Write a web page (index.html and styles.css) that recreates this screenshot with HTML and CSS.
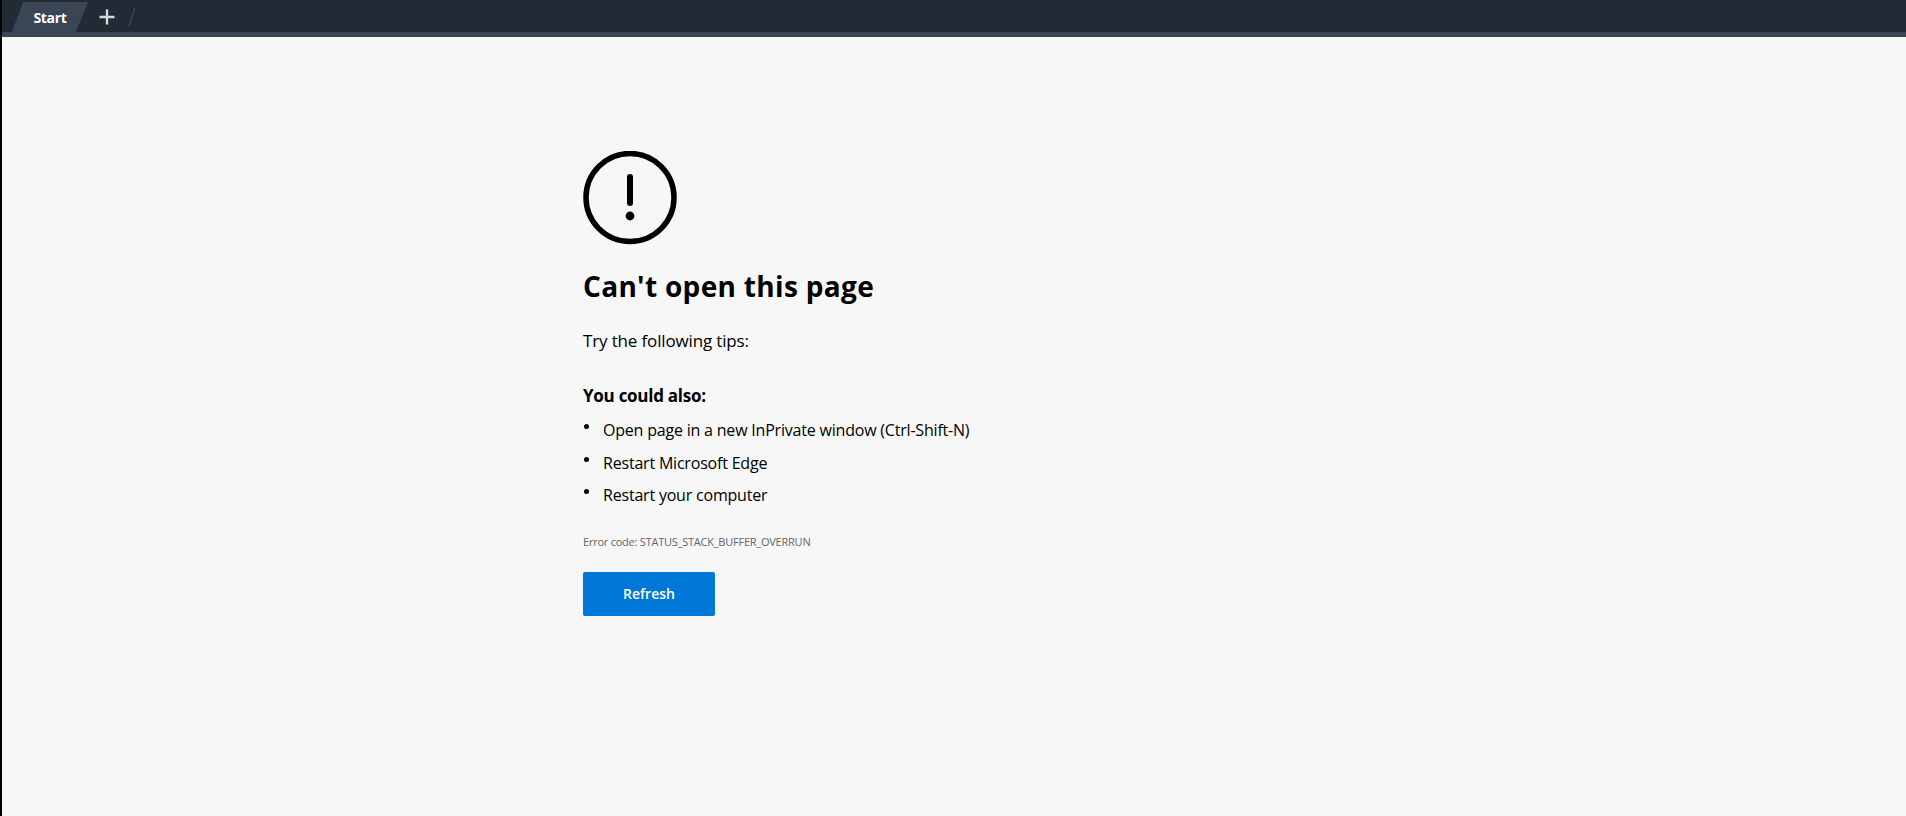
FILE: index.html
```html
<!DOCTYPE html>
<html lang="en">
<head>
<meta charset="utf-8">
<title>Start</title>
<link rel="stylesheet" href="styles.css">
</head>
<body>
<div class="window">
  <header class="tabbar">
    <div class="tabs">
      <div class="tab"><span class="tab-label">Start</span></div>
      <button class="new-tab" aria-label="New tab">
        <svg width="16" height="16" viewBox="0 0 16 16"><path d="M8 0.5V15.5M0.5 8H15.5" stroke="#d5d7da" stroke-width="2.4" fill="none"/></svg>
      </button>
      <svg class="divider" width="8" height="20" viewBox="0 0 8 20"><path d="M7 0.5L1 19.5" stroke="#4a5361" stroke-width="1" fill="none"/></svg>
    </div>
  </header>
  <div class="tabbar-edge"></div>
  <main class="page">
    <div class="content">
      <svg class="alert" width="94" height="94" viewBox="0 0 94 94">
        <circle cx="47" cy="46.5" r="44" fill="none" stroke="#000" stroke-width="5.5"/>
        <path d="M47 26V52" stroke="#000" stroke-width="6" stroke-linecap="round" fill="none"/>
        <circle cx="47" cy="65" r="4.4" fill="#000"/>
      </svg>
      <h1 class="title">Can't open this page</h1>
      <p class="tips">Try the following tips:</p>
      <h2 class="also">You could also:</h2>
      <ul class="list">
        <li>Open page in a new InPrivate window (Ctrl-Shift-N)</li>
        <li>Restart Microsoft Edge</li>
        <li>Restart your computer</li>
      </ul>
      <p class="code">Error code: STATUS_STACK_BUFFER_OVERRUN</p>
      <button class="refresh">Refresh</button>
    </div>
  </main>
</div>
</body>
</html>
```

FILE: styles.css
```css
html, body {
  margin: 0;
  height: 100%;
  overflow: hidden;
}
body {
  background: #000;
  font-family: "Open Sans", "Noto Sans", sans-serif;
  color: #000;
}
.window {
  height: 100%;
  margin-left: 2px;
  display: flex;
  flex-direction: column;
  background: #f7f7f7;
}
.tabbar {
  height: 32px;
  background: #212a35;
  flex: none;
}
.tabbar-edge {
  height: 5px;
  background: #3a4556;
  flex: none;
}
.tabs {
  display: flex;
  align-items: flex-end;
  height: 32px;
  padding-left: 10px;
}
.tab {
  width: 76px;
  height: 30px;
  background: #3a4556;
  clip-path: polygon(11px 0, 100% 0, calc(100% - 12px) 100%, 0 100%);
  display: flex;
  align-items: center;
  justify-content: center;
  margin-right: 11px;
}
.tab-label {
  color: #fff;
  font-size: 14px;
  font-weight: 700;
  letter-spacing: -0.3px;
}
.new-tab {
  width: 16px;
  height: 16px;
  padding: 0;
  border: 0;
  background: none;
  margin-bottom: 7px;
  margin-right: 13px;
  display: flex;
}
.divider {
  margin-bottom: 5px;
}
.page {
  flex: 1;
  padding: 114px 0 0 581px;
}
.content {
  display: flex;
  flex-direction: column;
  align-items: flex-start;
}
.alert {
  display: block;
  margin-bottom: 21px;
}
.title {
  margin: 0 0 23px;
  font-size: 28px;
  line-height: 40px;
  font-weight: 700;
  letter-spacing: 0.32px;
}
.tips {
  margin: 0 0 31px;
  font-size: 17px;
  line-height: 24px;
  letter-spacing: -0.15px;
}
.also {
  margin: 0 0 11px;
  font-size: 17px;
  line-height: 24px;
  font-weight: 700;
  letter-spacing: -0.27px;
}
.list {
  margin: 0 0 17px;
  padding: 0;
  list-style: none;
}
.list li {
  position: relative;
  padding-left: 20px;
  font-size: 16px;
  line-height: 22px;
  margin-bottom: 10.5px;
  letter-spacing: -0.2px;
}
.list li::before {
  content: "";
  position: absolute;
  left: 1px;
  top: 5px;
  width: 5px;
  height: 5px;
  border-radius: 50%;
  background: #000;
}
.code {
  margin: 0 0 22px;
  font-size: 11px;
  line-height: 16px;
  color: #666;
  letter-spacing: -0.23px;
}
.refresh {
  width: 132px;
  height: 44px;
  border: 0;
  border-radius: 2px;
  background: #0078d7;
  color: #fff;
  font-family: inherit;
  font-size: 14px;
  font-weight: 600;
  padding: 0;
}
```
